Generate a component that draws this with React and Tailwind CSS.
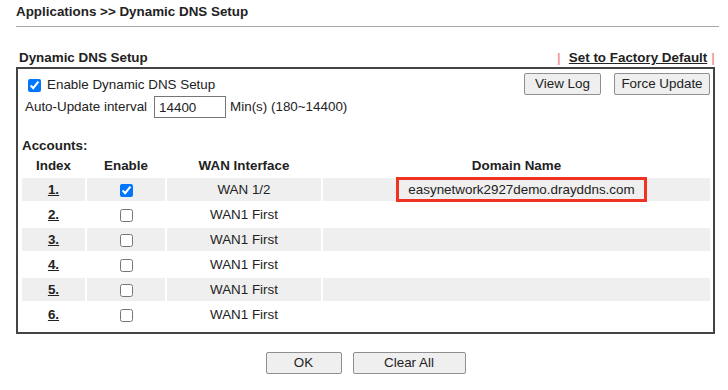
const accounts = [
  { index: "1.", enabled: true, wan: "WAN 1/2", domain: "easynetwork2927demo.drayddns.com" },
  { index: "2.", enabled: false, wan: "WAN1 First", domain: "" },
  { index: "3.", enabled: false, wan: "WAN1 First", domain: "" },
  { index: "4.", enabled: false, wan: "WAN1 First", domain: "" },
  { index: "5.", enabled: false, wan: "WAN1 First", domain: "" },
  { index: "6.", enabled: false, wan: "WAN1 First", domain: "" },
];

function Btn({ children, className = "" }) {
  return (
    <button
      type="button"
      className={
        "h-[22px] rounded-[2px] border border-[#8f8f8f] bg-[#efefef] text-[13.4px] leading-none text-[#222] " +
        className
      }
    >
      {children}
    </button>
  );
}

function Check({ checked }) {
  return (
    <input
      type="checkbox"
      defaultChecked={checked}
      className="m-0 h-[13px] w-[13px] align-middle accent-[#0075ff]"
    />
  );
}

export default function App() {
  return (
    <div className="h-[390px] w-[728px] overflow-hidden bg-white font-['Liberation_Sans',Arial,sans-serif] text-[13.4px] text-[#222]">
      <div className="pl-[16px] pr-[9px] pt-[3px]">
        <div className="border-b border-[#a8a8a8] pb-[6px] text-[13.4px] font-bold leading-[17px] text-[#222]">
          Applications &gt;&gt; Dynamic DNS Setup
        </div>

        <div className="mt-[22px] flex items-end justify-between pl-[3px] pr-[4px] leading-[17px]">
          <span className="font-bold">Dynamic DNS Setup</span>
          <span className="font-bold">
            <span className="text-[#f29c9c]">|</span>
            <span className="ml-[8px] underline">Set to Factory Default</span>
            <span className="ml-[4px] text-[#f29c9c]">|</span>
          </span>
        </div>

        <div className="mr-[4px] mt-[1px] border-2 border-[#444] pb-[4px] pl-[2px] pr-[1px] pt-[3px]">
          <div className="flex items-start justify-between pl-[5px] pr-[2px]">
            <div className="flex flex-col">
              <label className="flex h-[22px] items-center gap-[6px] pl-[3px] pt-[4px]">
                <Check checked />
                <span>Enable Dynamic DNS Setup</span>
              </label>
              <div className="mt-[2px] flex items-center">
                <span>Auto-Update interval</span>
                <input
                  type="text"
                  defaultValue="14400"
                  className="ml-[7px] h-[22px] w-[72px] border border-[#767676] px-[4px] text-[13.4px] outline-none"
                />
                <span className="ml-[4px]">Min(s) (180~14400)</span>
              </div>
            </div>
            <div className="flex gap-[13px] pt-[1px]">
              <Btn className="w-[77px]">View Log</Btn>
              <Btn className="w-[96px]">Force Update</Btn>
            </div>
          </div>

          <div className="mt-[19px] pl-[2px] font-bold leading-[17px]">Accounts:</div>

          <table className="w-full border-separate border-spacing-[2px] text-center">
            <thead>
              <tr className="font-bold">
                <th className="h-[20px] w-[63px] p-0">Index</th>
                <th className="w-[78px] p-0">Enable</th>
                <th className="w-[154px] p-0">WAN Interface</th>
                <th className="p-0">Domain Name</th>
              </tr>
            </thead>
            <tbody>
              {accounts.map((a, i) => {
                const bg = i % 2 === 0 ? "bg-[#efefef]" : "bg-white";
                return (
                  <tr key={a.index}>
                    <td className={"h-[23px] p-0 font-bold underline " + bg}>{a.index}</td>
                    <td className={"p-0 " + bg}>
                      <Check checked={a.enabled} />
                    </td>
                    <td className={"p-0 " + bg}>{a.wan}</td>
                    <td className={"p-0 " + bg}>
                      {a.domain && (
                        <div className="flex h-[23px] items-center justify-center">
                          <span className="-my-[1px] ml-[10px] flex h-[25px] items-center border-[3px] border-[#ee3322] px-[9px] leading-none">
                            {a.domain}
                          </span>
                        </div>
                      )}
                    </td>
                  </tr>
                );
              })}
            </tbody>
          </table>
        </div>

        <div className="mt-[18px] flex justify-center gap-[11px] pr-[4px]">
          <Btn className="w-[76px]">OK</Btn>
          <Btn className="w-[113px]">Clear All</Btn>
        </div>
      </div>
    </div>
  );
}
